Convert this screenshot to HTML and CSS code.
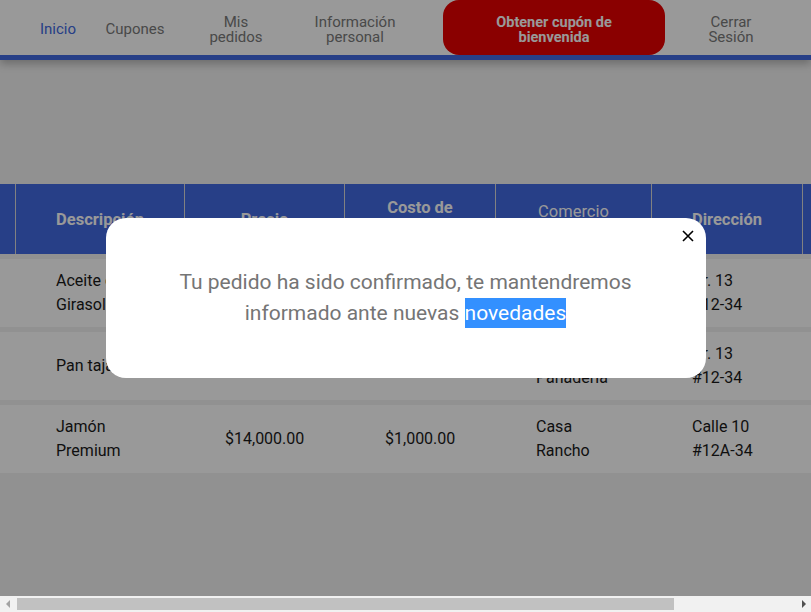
FILE: index.html
```html
<!DOCTYPE html>
<html lang="es">
<head>
<meta charset="utf-8">
<title>Mis pedidos</title>
<link rel="stylesheet" href="styles.css">
</head>
<body>
<header class="navbar">
  <ul class="nav">
    <li class="nav-item nav-item--inicio"><a class="nav-link nav-link--active" href="#">Inicio</a></li>
    <li class="nav-item nav-item--cupones"><a class="nav-link" href="#">Cupones</a></li>
    <li class="nav-item nav-item--pedidos"><a class="nav-link nav-link--narrow" href="#">Mis pedidos</a></li>
    <li class="nav-item nav-item--info"><a class="nav-link nav-link--medium" href="#">Información personal</a></li>
    <li class="nav-item nav-item--cta"><a class="nav-cta" href="#">Obtener cupón de bienvenida</a></li>
    <li class="nav-item nav-item--logout"><a class="nav-link nav-link--narrow" href="#">Cerrar Sesión</a></li>
  </ul>
</header>

<main class="content">
  <table class="orders">
    <colgroup>
      <col class="col-sel">
      <col class="col-desc">
      <col class="col-price">
      <col class="col-ship">
      <col class="col-shop">
      <col class="col-addr">
      <col class="col-state">
    </colgroup>
    <thead>
      <tr>
        <th></th>
        <th>Descripción</th>
        <th>Precio</th>
        <th>Costo de<br>envío</th>
        <th class="th-light">Comercio<br>asociado</th>
        <th>Dirección</th>
        <th>Estado</th>
      </tr>
    </thead>
    <tbody>
      <tr>
        <td></td>
        <td>Aceite de<br>Girasol</td>
        <td>$8,500.00</td>
        <td>$1,000.00</td>
        <td>Casa<br>Rancho</td>
        <td>Cr. 13<br>#12-34</td>
        <td>Confirmado</td>
      </tr>
      <tr>
        <td></td>
        <td>Pan tajado</td>
        <td>$4,200.00</td>
        <td>$1,000.00</td>
        <td>La<br>Panadería</td>
        <td>Cr. 13<br>#12-34</td>
        <td>Confirmado</td>
      </tr>
      <tr>
        <td></td>
        <td>Jamón<br>Premium</td>
        <td>$14,000.00</td>
        <td>$1,000.00</td>
        <td>Casa<br>Rancho</td>
        <td>Calle 10<br>#12A-34</td>
        <td>Confirmado</td>
      </tr>
    </tbody>
  </table>
</main>

<div class="backdrop">
  <div class="modal" role="dialog">
    <button class="modal-close" type="button" aria-label="Cerrar">
      <svg width="12" height="12" viewBox="0 0 12 12"><path d="M1 1L11 11M11 1L1 11" stroke="#000" stroke-width="1.6" fill="none"/></svg>
    </button>
    <p class="modal-text">Tu pedido ha sido confirmado, te mantendremos informado ante nuevas <span class="highlight">novedades</span></p>
  </div>
</div>

<div class="hscroll" aria-hidden="true">
  <span class="hscroll-arrow hscroll-arrow--left"></span>
  <div class="hscroll-track"><div class="hscroll-thumb"></div></div>
  <span class="hscroll-arrow hscroll-arrow--right"></span>
</div>
</body>
</html>
```
FILE: styles.css
```css
html, body {
  margin: 0;
  padding: 0;
}

html {
  overflow: hidden;
}

body {
  background: #f2f2f2;
  font-family: Roboto, "Liberation Sans", sans-serif;
  color: #1a1a1a;
}

/* ---------- navbar ---------- */
.navbar {
  background: #ffffff;
  border-bottom: 5px solid #4169e1;
  box-shadow: 0 4px 8px rgba(0, 0, 0, 0.25);
  position: relative;
  z-index: 1;
}

.nav {
  list-style: none;
  margin: 0;
  padding: 0 0 0 20px;
  height: 55px;
  display: flex;
  align-items: center;
}

.nav-item {
  display: flex;
  align-items: center;
  justify-content: center;
  height: 100%;
  text-align: center;
}

.nav-item--inicio { width: 76px; }
.nav-item--cupones { width: 78px; }
.nav-item--pedidos { width: 124px; }
.nav-item--info { width: 114px; }
.nav-item--cta { width: 222px; margin-left: 31px; }
.nav-item--logout { width: 132px; }

.nav-link {
  display: inline-block;
  padding-top: 4px;
  color: #7a7a7a;
  text-decoration: none;
  font-size: 15px;
  line-height: 15px;
}

.nav-link--active { color: #4169e1; }
.nav-link--narrow { max-width: 60px; }
.nav-link--medium { max-width: 90px; }

.nav-cta {
  display: flex;
  align-items: center;
  justify-content: center;
  box-sizing: border-box;
  width: 100%;
  height: 55px;
  padding: 4px 40px 0;
  background: #e60000;
  border-radius: 16px;
  color: #ffffff;
  font-weight: 700;
  font-size: 14.5px;
  line-height: 15px;
  text-decoration: none;
}

/* ---------- table ---------- */
.content {
  padding-top: 119px;
}

.orders {
  border-collapse: separate;
  border-spacing: 0 5px;
  table-layout: fixed;
  width: 962px;
}

.col-sel { width: 15px; }
.col-desc { width: 169px; }
.col-price { width: 160px; }
.col-ship { width: 151px; }
.col-shop { width: 156px; }
.col-addr { width: 151px; }
.col-state { width: 160px; }

.orders th {
  height: 68px;
  padding: 0;
  background: #4169e1;
  color: #ffffff;
  font-size: 16.5px;
  font-weight: 700;
  line-height: 23px;
  text-align: center;
  vertical-align: middle;
}

.orders th + th {
  border-left: 1px solid #d8d8d8;
}

.orders th.th-light {
  font-weight: 400;
  line-height: 17px;
  padding-top: 2px;
}

.orders td {
  height: 68px;
  padding: 0 0 0 41px;
  background: #ffffff;
  font-size: 16px;
  line-height: 24px;
  vertical-align: middle;
  text-align: left;
  white-space: nowrap;
}

.orders td:first-child {
  padding: 0;
}

/* ---------- modal ---------- */
.backdrop {
  position: fixed;
  top: 0;
  left: 0;
  right: 0;
  bottom: 16px;
  z-index: 10;
  background: rgba(0, 0, 0, 0.4);
  display: flex;
  align-items: center;
  justify-content: center;
}

.modal {
  position: relative;
  box-sizing: border-box;
  width: 600px;
  height: 160px;
  background: #ffffff;
  border-radius: 20px;
  display: flex;
  align-items: center;
  justify-content: center;
  padding: 0 66px;
}

.modal-close {
  position: absolute;
  top: 12px;
  right: 12px;
  width: 12px;
  height: 12px;
  padding: 0;
  border: 0;
  background: none;
  display: flex;
}

.modal-text {
  margin: 0;
  font-size: 21px;
  line-height: 31px;
  color: #757575;
  text-align: center;
}

.highlight {
  background: #3390ff;
  color: #ffffff;
  padding: 3px 0;
}

/* ---------- horizontal scrollbar ---------- */
.hscroll {
  position: fixed;
  left: 0;
  right: 0;
  bottom: 0;
  height: 16px;
  z-index: 20;
  background: #f1f1f1;
  display: flex;
  align-items: center;
}

.hscroll-track {
  flex: 1;
  height: 100%;
  padding: 2px;
  box-sizing: border-box;
}

.hscroll-thumb {
  width: 657px;
  height: 12px;
  background: #c1c1c1;
}

.hscroll-arrow {
  width: 15px;
  height: 16px;
  display: flex;
  align-items: center;
  justify-content: center;
}

.hscroll-arrow::before {
  content: "";
  width: 0;
  height: 0;
  border-top: 4px solid transparent;
  border-bottom: 4px solid transparent;
}

.hscroll-arrow--left::before {
  border-right: 4px solid #a3a3a3;
}

.hscroll-arrow--right::before {
  border-left: 4px solid #505050;
}
```
